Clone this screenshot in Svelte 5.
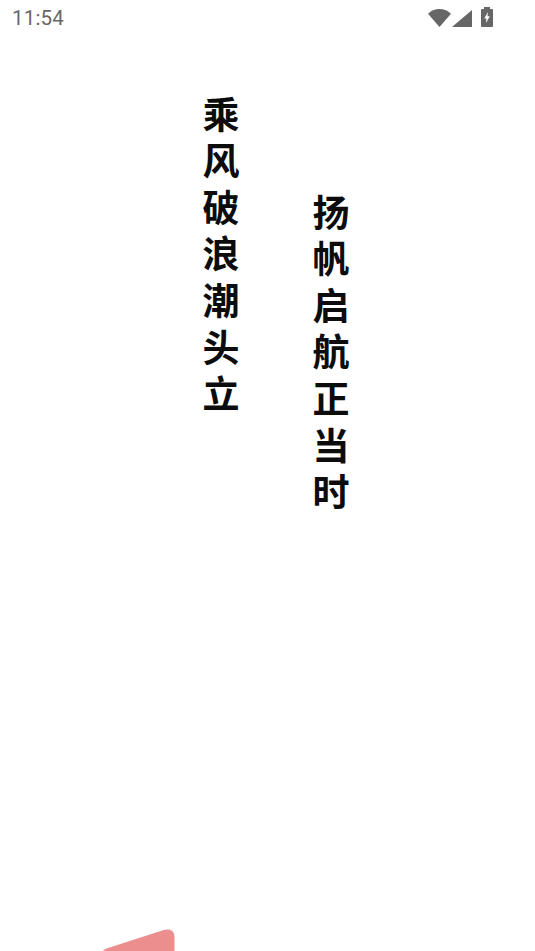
<script>
  const columns = [
    { text: '乘风破浪潮头立', late: false },
    { text: '扬帆启航正当时', late: true }
  ];
</script>

<div class="page">
  <header class="status">
    <span class="time">11:54</span>
    <div class="icons">
      <svg class="wifi" viewBox="0 0 23 18" aria-hidden="true">
        <path d="M0 4.800C3.100 1.800 7 0 11.500 0S19.900 1.800 23 4.800L11.500 18z" />
      </svg>
      <svg class="signal" viewBox="0 0 20 17" aria-hidden="true">
        <path d="M20 0v17H0z" />
      </svg>
      <svg class="battery" viewBox="0 0 12 20" aria-hidden="true">
        <path fill-rule="evenodd" d="M3 0h6v2h2a1 1 0 0 1 1 1v16a1 1 0 0 1-1 1H1a1 1 0 0 1-1-1V3a1 1 0 0 1 1-1h2zM7 5 3.200 11.500h2.200L5 16l3.800-6.800H6.500z" />
      </svg>
    </div>
  </header>

  <main class="poem">
    {#each columns as col}
      <p class="line" class:late={col.late}>{col.text}</p>
    {/each}
  </main>

  <svg class="corner" viewBox="0 0 75 24" aria-hidden="true">
    <path d="M0 24C1.200 22.500 3 21.600 5 21L60 3.200C67 1 71.500 3.500 71.500 10V24z" />
  </svg>
</div>

<style>
  :global(body) {
    margin: 0;
    background: #fff;
  }
  .page {
    position: relative;
    height: 951px;
    overflow: hidden;
    background: #fff;
    font-family: Roboto, "Noto Sans", sans-serif;
  }
  .status {
    display: flex;
    justify-content: space-between;
    align-items: center;
    height: 36px;
    padding: 0 42px 0 12px;
  }
  .time {
    font-size: 20.500px;
    letter-spacing: 0.2px;
    color: #666;
  }
  .icons {
    display: flex;
    align-self: flex-start;
    align-items: flex-end;
    gap: 1px;
    margin-top: 7px;
  }
  .icons svg {
    display: block;
    fill: #666;
  }
  .wifi {
    width: 23px;
    height: 18px;
  }
  .signal {
    width: 20px;
    height: 17px;
  }
  .battery {
    width: 12px;
    height: 20px;
    margin-left: 8px;
  }
  .poem {
    display: flex;
    gap: 73px;
    padding: 60px 0 0 202px;
  }
  .line {
    margin: 0;
    writing-mode: vertical-rl;
    font-family: "Noto Sans CJK SC", sans-serif;
    font-size: 37px;
    font-weight: 700;
    line-height: 37px;
    letter-spacing: 9.600px;
    color: #0c0c0c;
  }
  .late {
    margin-top: 98px;
  }
  .corner {
    position: absolute;
    left: 103px;
    bottom: 0;
    width: 75px;
    height: 24px;
    fill: #ec8e8e;
  }
</style>
